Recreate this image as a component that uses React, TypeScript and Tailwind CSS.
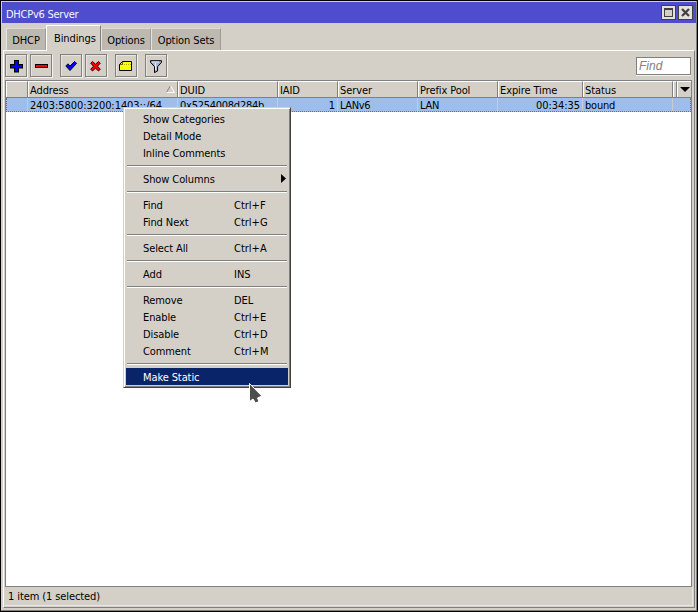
import React from "react";

const tabs = [
  { title: "DHCP", width: "w-[40px]" },
  { title: "Bindings", width: "w-[55px]", active: true },
  { title: "Options", width: "w-[50px]" },
  { title: "Option Sets", width: "w-[70px]" },
];

function ToolButton({ children, className = "" }: { children: React.ReactNode; className?: string }) {
  return (
    <button className={`h-[23px] w-[22px] shrink-0 border border-[#808080] bg-[#d4d0c8] shadow-[inset_1px_1px_0_#e8e5e0,1px_1px_0_#f4f2ee] ${className}`}>
      <svg width="20" height="21" viewBox="0 0 20 21">{children}</svg>
    </button>
  );
}

const columns = [
  { title: "", width: "w-[22px]", value: "" },
  { title: "Address", width: "w-[150px]", value: "2403:5800:3200:1403::/64", sorted: true, tight: "tracking-[-0.06px]" },
  { title: "DUID", width: "w-[100px]", value: "0x5254008d284b", tight: "tracking-[-0.26px]" },
  { title: "IAID", width: "w-[60px]", value: "1", right: true },
  { title: "Server", width: "w-[80px]", value: "LANv6", tight: "tracking-[-0.4px]" },
  { title: "Prefix Pool", width: "w-[80px]", value: "LAN", tight: "tracking-[-0.3px]" },
  { title: "Expire Time", width: "w-[85px]", value: "00:34:35", right: true, tight: "tracking-[-0.06px]" },
  { title: "Status", width: "w-[90px]", value: "bound", tight: "tracking-[-0.2px]" },
];

const groups: { label: string; keys?: string; sub?: boolean; active?: boolean }[][] = [
  [{ label: "Show Categories" }, { label: "Detail Mode" }, { label: "Inline Comments" }],
  [{ label: "Show Columns", sub: true }],
  [{ label: "Find", keys: "Ctrl+F" }, { label: "Find Next", keys: "Ctrl+G" }],
  [{ label: "Select All", keys: "Ctrl+A" }],
  [{ label: "Add", keys: "INS" }],
  [
    { label: "Remove", keys: "DEL" },
    { label: "Enable", keys: "Ctrl+E" },
    { label: "Disable", keys: "Ctrl+D" },
    { label: "Comment", keys: "Ctrl+M" },
  ],
  [{ label: "Make Static", active: true }],
];

function ContextMenu() {
  return (
    <div className="absolute left-[123px] top-[107px] h-[281px] w-[168px] border border-t-[#d4d0c8] border-l-[#d4d0c8] border-r-[#404040] border-b-[#404040] bg-[#d4d0c8] px-[2px] pt-[2px] shadow-[inset_1px_1px_0_#fff,inset_-1px_-1px_0_#808080]">
      {groups.map((group, g) => (
        <div key={g}>
          {g > 0 && <div className="mx-px mt-[4px] mb-[3px] h-[2px] border-t border-t-[#808080] bg-white" />}
          {group.map((item) => (
            <div key={item.label} className={`relative flex h-[17px] items-center pt-[2px] pl-[17px] ${item.active ? "bg-[#0a246a] text-white" : ""}`}>
              <span className="w-[91px]">{item.label}</span>
              <span className="tracking-normal">{item.keys}</span>
              {item.sub && (
                <svg className="absolute right-[2px] top-[4px]" width="5" height="9" viewBox="0 0 5 9"><path d="M0 0L5 4.5L0 9Z" /></svg>
              )}
            </div>
          ))}
        </div>
      ))}
    </div>
  );
}

function Toolbar() {
  return (
    <div className="flex h-[29px] shrink-0 items-start pt-[3px] pl-px">
      <ToolButton><path d="M8 5h5v4h4v4.5h-4v4H8v-4H4V9h4z" /><path fill="#0000ff" d="M9 6h3v4h4v2.5h-4v4H9v-4H5V10h4z" /></ToolButton>
      <ToolButton className="ml-[3px]"><path d="M4 9h13v4H4z" /><path fill="#f00" d="M5 10h11v2H5z" /></ToolButton>
      <ToolButton className="ml-[8px]"><path fill="#0000ff" stroke="#000" strokeWidth="0.9" d="M4.8 11L7 8.8L9 11L13.6 6.4L15.6 8.4L9 15.6Z" /></ToolButton>
      <ToolButton className="ml-[3px]"><path fill="#f00" stroke="#000" strokeWidth="0.9" d="M4.7 8.2L6.5 6.5L9.5 9.2L12.5 6.5L14.3 8.2L11.5 11.2L14.3 14.2L12.5 16L9.5 13.2L6.5 16L4.7 14.2L7.5 11.2Z" /></ToolButton>
      <ToolButton className="ml-[8px]"><path fill="#ff0" stroke="#000" d="M6.5 6.5H15.5V15.5H3.5V9.5Z" /><path fill="none" stroke="#000" strokeWidth="0.6" d="M3.5 9.5H6.5V6.5" /><path stroke="#b0b000" strokeDasharray="1 1" d="M8 9.5H15" /></ToolButton>
      <ToolButton className="ml-[8px]"><path fill="#9fb0d0" stroke="#000" d="M4.5 5.7H15.5V7.3L11.6 11.7V16L8.5 17.6V11.7L4.5 7.3Z" /><path stroke="#e8eefa" strokeWidth="1.2" d="M6 7H13M9.6 8V15" /></ToolButton>
      <div className="mt-[3px] mr-[3px] ml-auto h-[18px] w-[55px] border border-[#808080] bg-white pl-[2px] font-['Liberation_Sans',Arial,sans-serif] text-[12px] leading-[16px] text-[#808080] italic tracking-normal shadow-[0_1px_0_#f4f2ee]">Find</div>
    </div>
  );
}

function BindingsTable() {
  return (
    <section className="mr-[2px] ml-px flex min-h-0 flex-1 flex-col border border-[#808080] bg-white">
      <div className="flex h-[17px] shrink-0 border-b border-b-[#808080] bg-[#d4d0c8]">
        {columns.map((c, i) => (
          <div key={i} className={`relative shrink-0 border-t border-l border-t-white border-l-white border-r border-r-[#808080] pt-[2px] pl-px ${c.width}`}>
            {c.title}
            {c.sorted && (
              <svg className="absolute top-[3px] right-[2px]" width="9" height="8" viewBox="0 0 9 8" fill="none"><path stroke="#808080" d="M0.5 7.5L4.5 0.5" /><path stroke="#fff" d="M4.5 0.5L8.5 7.5H0.5" /></svg>
            )}
          </div>
        ))}
        <div className="w-[4px] shrink-0 border-t border-l border-t-white border-l-white border-r border-r-[#808080]" />
        <div className="flex flex-1 items-center justify-center border-t border-l border-t-white border-l-white">
          <svg width="10" height="5" viewBox="0 0 10 5"><path d="M0 0H10L5 5Z" /></svg>
        </div>
      </div>
      <div className="relative flex h-[14px] shrink-0 bg-[#9dbeea]">
        {columns.map((c, i) => (
          <div key={i} className={`shrink-0 border-r border-r-[#c8ccd2] pl-[2px] leading-[16px] ${c.right ? "pr-[2px] text-right" : ""} ${c.width}`}>
            <span className={c.tight}>{c.value}</span>
          </div>
        ))}
        <div className="absolute inset-0 border border-t-0 border-dotted border-[#707070]" />
      </div>
    </section>
  );
}

export default function App() {
  return (
    <div className="relative h-[612px] w-[698px] overflow-hidden bg-black px-px pt-px font-['DejaVu_Sans_Condensed','DejaVu_Sans',sans-serif] text-[11px] leading-[13px] tracking-[-0.1px] whitespace-nowrap text-black [font-stretch:condensed]">
      <div className="flex h-[610px] w-[696px] flex-col border border-t-[#d4d0c8] border-l-[#d4d0c8] border-r-[#808080] border-b-[#808080] bg-[#d4d0c8]">
        <header className="flex h-[21px] shrink-0 items-start bg-[#4d4dcd] pr-[3px] pl-[4px] text-[#f4f4ff]">
          <span className="flex-1 pt-[6px] tracking-[-0.25px]">DHCPv6 Server</span>
          <div className="flex gap-[2px] pt-[3px]">
            <svg width="15" height="15" viewBox="0 0 15 15" shapeRendering="crispEdges"><path fill="#404040" d="M0 0H15V15H0Z" /><path fill="#e4e0da" d="M1 1H14V14H1Z" /><path fill="#404040" d="M3 3H12V12H3Z" /><path fill="#d4d0c8" d="M4 5H11V11H4Z" /></svg>
            <svg width="15" height="15" viewBox="0 0 15 15"><path fill="#404040" d="M0 0H15V15H0Z" /><path fill="#e4e0da" d="M1 1H14V14H1Z" /><path stroke="#404040" strokeWidth="2.2" d="M4 4L11 11M11 4L4 11" /></svg>
          </div>
        </header>
        <nav className="flex h-[27px] shrink-0 items-end pl-[4px]">
          {tabs.map((tab) => (
            <div key={tab.title} className={`flex border-t border-l border-r border-r-[#808080] ${tab.width} ${tab.active
              ? "z-10 -mb-px h-[26px] border-t-white border-l-white bg-[#d4d0c8] pt-[6px] pl-[7px]"
              : "h-[22px] justify-center border-t-[#dedbd5] border-l-[#e6e3de] border-r-[#a09c95] bg-[#bdb9b1] pt-[5px]"}`}>
              {tab.title}
            </div>
          ))}
        </nav>
        <main className="mr-px mb-[2px] ml-px flex min-h-0 flex-1 flex-col border border-t-white border-r-[#808080] border-b-[#808080] border-l-white">
          <Toolbar />
          <BindingsTable />
          <footer className="mr-px mb-px ml-px h-[19px] shrink-0 border-r border-b border-r-[#eae8e3] border-b-[#eae8e3] pt-[3px] pl-[3px]">1 item (1 selected)</footer>
        </main>
      </div>
      <ContextMenu />
      <svg className="absolute top-[382px] left-[248px]" width="16" height="24" viewBox="0 0 16 24"><path fill="#4d4d4d" stroke="#fff" d="M1.5 1.5V19.5L5 17L7.5 21L11 19.5L9.5 16L13.8 14Z" /></svg>
    </div>
  );
}
